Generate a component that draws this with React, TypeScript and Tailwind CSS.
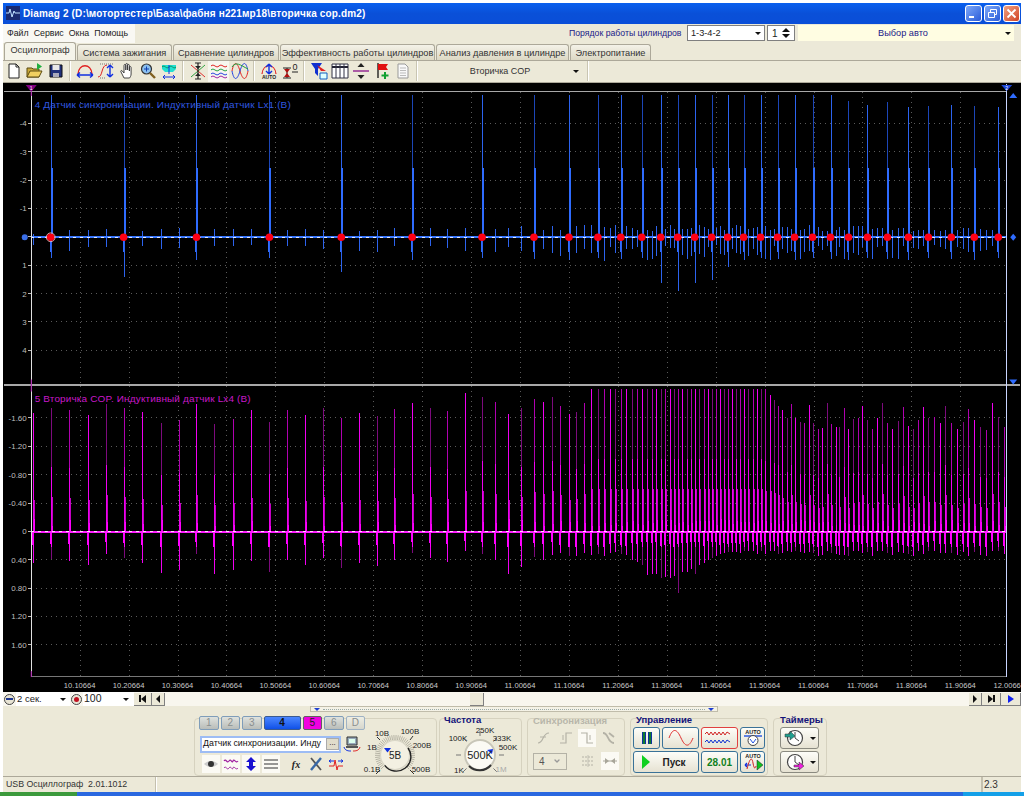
import { ChevronDown } from "lucide-react";
import type { ReactNode } from "react";

// first channel: sync pulses, one per engine cycle
const syncX = [50, 123, 196, 269, 341, 412, 482, 534, 569, 598, 621, 642, 661, 678, 695, 712, 728, 744, 761, 778, 795, 813, 831, 849, 868, 888, 909, 929, 952, 975, 999];
const syncTop = [95, 95, 95, 95, 95, 95, 95, 95, 95, 95, 95, 95, 95, 95, 95, 95, 95, 95, 95, 95, 95, 95, 95, 101, 105, 102, 107, 106, 105, 106, 107];
const syncLow: Record<number, number> = { 123: 277, 341: 272, 642: 258, 661: 283, 678: 291, 695: 283, 712: 280, 728: 267 };
const gridX = Array.from({ length: 20 }, (_, i) => 79 + 49 * i);

function rnd(n: number) {
  const v = Math.sin(n * 12.9898) * 43758.5453;
  return v - Math.floor(v);
}

function line(x: number, a: number, b: number) {
  return `M${Math.round(x) + 0.5} ${a}V${b}`;
}

function buildBlue() {
  let thin = "";
  let dim = "";
  let thick = "";
  syncX.forEach((x, i) => {
    const low = syncLow[x] ?? 258 + (i % 3);
    if (i % 2) dim += line(x, syncTop[i], 168);
    else thin += line(x, syncTop[i], 168);
    thin += line(x, 168, 237) + line(x, 237, low);
    thick += line(x + 1, 168, 232) + line(x, 168, 232) + line(x - 1, 238, 252) + line(x + 1, 222, 236);
    const next = syncX[i + 1];
    const stop = next ?? x;
    for (let j = 1; j < 4 && (next || i === 0); j++) {
      const mx = x + ((stop - x) * j) / 4;
      const busy = mx > 520 && mx < 900;
      thin += line(mx, 231 - rnd(mx) * (busy ? 6 : 3), 245 + rnd(mx + 1) * (busy ? 16 : 7));
    }
  });
  thin += line(32, 234, 245);
  return { thin, dim, thick };
}

function buildPink() {
  const xs = [32];
  syncX.forEach((x, i) => {
    if (i === syncX.length - 1) {
      xs.push(x, 1005);
      return;
    }
    for (let j = 0; j < 4; j++) xs.push(x + ((syncX[i + 1] - x) * j) / 4);
  });
  let bright = "";
  let mid = "";
  let dim = "";
  let soft = "";
  let thick = "";
  xs.forEach((x, i) => {
    const r = rnd(i + 3);
    let top = 400 + r * 25;
    if (x > 450 && x <= 590) top = 393 + r * 22;
    if (x > 590 && x <= 765) top = 389;
    if (x > 765 && x <= 785) top = 389 + ((x - 765) / 20) * 26;
    if (x > 785) top = i % 4 === 0 ? 402 + r * 8 : 418 + r * 13;
    const half = x > 590 && x < 765 ? 460 : Math.max(462, 532 - (532 - top) * 0.52);
    const dip = Math.exp(-Math.pow((x - 672) / 32, 2)) * 42 * (0.55 + rnd(i + 9) * 0.6);
    const low = Math.round(Math.max(551 + r * 24 * (x < 560 ? 1 : 0.25), 552 + dip));
    const tall = line(x, Math.round(top), Math.round(half));
    if (i % 3 === 1) dim += tall;
    else if (i % 3 === 2) mid += tall;
    else bright += tall;
    bright += line(x, Math.round(half), 532);
    soft += line(x + 1, Math.round(half) + 30, 532);
    if (i % 4 === 1) dim += line(x, 546, low);
    else bright += line(x, 546, low);
    thick += line(x, 532, 548) + line(x + 1, 520 + rnd(i) * 7, 532) + line(x - 1, 532, 542 + r * 6);
  });
  return { bright, mid, dim, soft, thick };
}

const blue = buildBlue();
const pink = buildPink();

function Scope() {
  const topY = [-4, -3, -2, -1, 0, 1, 2, 3, 4];
  const lowY = ["-1.60", "-1.20", "-0.80", "-0.40", "0", "0.40", "0.80", "1.20", "1.60"];
  const dots = "#5a5a5a";
  return (
    <svg viewBox="3 83 1018 610" className="block w-full h-[610px] bg-black" fontFamily="'Liberation Sans', sans-serif">
      {gridX.slice(0, 19).map((x) => (
        <g key={x} stroke={dots} strokeDasharray="1 4" shapeRendering="crispEdges">
          <path d={`M${x + 0.5} 92V384`} />
          <path d={`M${x + 0.5} 386V678`} />
        </g>
      ))}
      {topY.map((v, i) => (
        <g key={v}>
          {v !== 0 && <path d={`M30 ${123.5 + i * 28.4}H1007`} stroke={dots} strokeDasharray="1 4" shapeRendering="crispEdges" />}
          <path d={`M27 ${123.5 + i * 28.4}H30`} stroke="#bbb" shapeRendering="crispEdges" />
          <text x="26" y={126.500 + i * 28.4} fontSize="8" fill="#bdbdbd" textAnchor="end">{v}</text>
        </g>
      ))}
      {lowY.map((v, i) => (
        <g key={v}>
          {v !== "0" && <path d={`M30 ${418.5 + i * 28.4}H1007`} stroke={dots} strokeDasharray="1 4" shapeRendering="crispEdges" />}
          <path d={`M27 ${418.5 + i * 28.4}H30`} stroke="#bbb" shapeRendering="crispEdges" />
          <text x="26" y={421.500 + i * 28.4} fontSize="8" fill="#bdbdbd" textAnchor="end">{v}</text>
        </g>
      ))}

      <g fill="none" shapeRendering="crispEdges">
        <path d={blue.dim} stroke="#1c46b8" />
        <path d={blue.thin} stroke="#2c63ee" />
        <path d={blue.thick} stroke="#2f6cff" />
        <path d="M30 237.5H1007" stroke="#3a78ff" strokeWidth="2" />
        <path d="M30 237.5H1007" stroke="#dfe8ff" strokeDasharray="3 4" />

        <path d={pink.dim} stroke="#7d0a7d" />
        <path d={pink.mid} stroke="#b000b0" />
        <path d={pink.soft} stroke="#c400c4" />
        <path d={pink.bright} stroke="#f000f0" />
        <path d={pink.thick} stroke="#ff00ff" />
        <path d="M30 532.5H1007" stroke="#ff20ff" strokeWidth="2" />
        <path d="M30 532.5H1007" stroke="#ffd8ff" strokeDasharray="3 4" />

        <path d="M3 91.5H1007" stroke="#a8a8a8" />
        <path d="M3 385H1021" stroke="#a8a8a8" strokeWidth="2" />
        <path d="M30 677.5H1007" stroke="#777" />
        <path d="M30.5 91V678" stroke="#e0e0e0" />
        <path d="M1007.5 84V678" stroke="#c8d4ff" />
      </g>

      {syncX.map((x) => (
        <circle key={x} cx={x} cy="237.5" r="3.8" fill="#ff0014" />
      ))}
      <circle cx="50" cy="237.5" r="4.4" fill="none" stroke="#ffc0c0" strokeWidth="0.8" />
      <circle cx="24" cy="237.5" r="3" fill="#3a6ee8" />
      <path d="M1014 234l3 3.5l-3 3.5l-3-3.5z" fill="#2f6cff" />
      <path d="M1010 98l4-5l4 5z" fill="#2f6cff" />
      <path d="M1010 380l4 5l4-5z" fill="#2f6cff" />
      <path d="M25 85h11l-5.5 7z" fill="#800080" />
      <path d="M1002 85h11l-5.5 6z" fill="#1c46d8" />
      <path d="M30.5 92V96M30.5 380V392M30.5 672V678" stroke="#a000a0" />
      <text x="30.5" y="90" fontSize="5" fill="#fff" textAnchor="middle">1</text>
      <text x="1007.5" y="90" fontSize="5" fill="#fff" textAnchor="middle">2</text>

      <text x="34" y="108" fontSize="10" letterSpacing="0.15" fill="#3058e0">4 Датчик синхронизации. Индуктивный датчик Lx1 (В)</text>
      <text x="34" y="402" fontSize="10" letterSpacing="0.15" fill="#c818c8">5 Вторичка COP. Индуктивный датчик Lx4 (В)</text>

      {gridX.map((x, i) => (
        <text key={x} x={x} y="688.500" fontSize="7.600" fill="#c8c8c8" textAnchor="middle">
          {(10.10664 + i * 0.1).toFixed(5)}
        </text>
      ))}
    </svg>
  );
}

function Ic({ children, active }: { children: ReactNode; active?: boolean }) {
  return (
    <div className={`w-[21px] h-[21px] flex items-center justify-center shrink-0 ${active ? "bg-[#f7f6ef]" : ""}`}>
      <svg width="18" height="18" viewBox="0 0 18 18" fill="none">{children}</svg>
    </div>
  );
}

function Sep() {
  return <div className="w-px h-[20px] bg-[#c9c5b2] border-r border-white box-content mx-[3px] shrink-0" />;
}

const sFont = { fontFamily: "'Liberation Sans', sans-serif" };

function Toolbar() {
  return (
    <div className="h-[22px] flex items-center bg-[#ece9d8] border-b border-[#aca899]">
      <Ic><path d="M4 2h7l3 3v11H4z" fill="#fff" stroke="#222" /><path d="M11 2v3h3" stroke="#222" /></Ic>
      <Ic><path d="M1 15V6h5l1 1h6v8z" fill="#c9a93a" stroke="#5a4a10" /><path d="M1 15l3-6h12l-3 6z" fill="#f0d060" stroke="#5a4a10" /><path d="M11 1l5 3.5l-5 3.5z" fill="#20b040" /></Ic>
      <Ic><path d="M3 3h12v12H3z" fill="#20307a" stroke="#111" /><path d="M5.500 3h7v5h-7z" fill="#e8e8e8" /><path d="M6 11h6v4H6z" fill="#aab" /></Ic>
      <Sep />
      <Ic><path d="M2 12C3 1 15 1 16 12" stroke="#e02020" strokeWidth="1.3" /><path d="M1 13h16M1 13l3-2.500M1 13l3 2.500M17 13l-3-2.500M17 13l-3 2.500" stroke="#1030e0" strokeWidth="1.4" /></Ic>
      <Ic><path d="M1 15C6 15 4 3 10 3" stroke="#e02020" /><path d="M3 2h14M3 16h6" stroke="#777" strokeDasharray="1 1" /><path d="M13 3v12M13 3l-3 3M13 3l3 3M13 15l-3-3M13 15l3-3" stroke="#1030e0" strokeWidth="1.4" /></Ic>
      <Ic><path d="M6 16L3 10c-.8-1.400.6-2 1.400-1L6 11V3.500c0-1.500 1.800-1.500 1.800 0V8V2.500c0-1.400 1.800-1.400 1.800 0V8V3.500c0-1.400 1.800-1.400 1.800 0V9V5.500c0-1.300 1.700-1.300 1.700 0V12c0 2-1 3-1.500 4z" fill="#fff" stroke="#333" strokeWidth="0.9" /></Ic>
      <Ic><circle cx="7.500" cy="7" r="5" fill="#8ac0f0" stroke="#333" strokeWidth="1.200" /><path d="M5 7h5M7.500 4.500v5" stroke="#1040b0" /><path d="M11 11l5 5" stroke="#806020" strokeWidth="2.400" /></Ic>
      <Ic><path d="M2 3h14v4l-3 3H5L2 7z" fill="#20e0d0" /><path d="M2 5c3-3 4 3 7 0s4 3 7 0" stroke="#109060" /><path d="M3 15h12M3 15l2-2M3 15l2 2M15 15l-2-2M15 15l-2 2M9 3v9" stroke="#1030e0" /></Ic>
      <Sep />
      <Ic><path d="M2 3l14 12" stroke="#e03030" /><path d="M16 3L2 15" stroke="#30a040" /><path d="M9 1v16M6 1h6M6 17h6" stroke="#222" strokeWidth="1.200" /><path d="M6 4h6l-3 3zM6 14h6l-3-3z" fill="#222" /></Ic>
      <Ic active><path d="M1 4c3-3 5 3 8 0s5 3 8 0" stroke="#e02020" /><path d="M1 8c3-3 5 3 8 0s5 3 8 0" stroke="#20a040" /><path d="M1 12c3-3 5 3 8 0s5 3 8 0" stroke="#2040e0" /><path d="M1 15c3-3 5 3 8 0s5 3 8 0" stroke="#a020a0" /></Ic>
      <Ic><path d="M1 9C3-1 6-1 9 9s6 10 8 0" stroke="#e02020" /><path d="M1 9C3 19 6 19 9 9s6-10 8 0" stroke="#2040e0" /><path d="M1 5c4-6 8-2 16 2" stroke="#20a040" /></Ic>
      <Sep />
      <Ic><path d="M2 12C3 1 15 1 16 12" stroke="#e02020" strokeWidth="1.2" /><path d="M9 2v10M9 2L6 5M9 2l3 3M9 12l-3-3M9 12l3-3" stroke="#1030e0" strokeWidth="1.400" /><text x="9" y="17" fontSize="5" fontWeight="700" fill="#222" textAnchor="middle" style={sFont}>AUTO</text></Ic>
      <Ic><path d="M2 6h8M2 16h8M6 6v10" stroke="#222" /><path d="M3 7h6L6 11zM3 15h6l-3-4z" fill="#b01010" /><text x="14" y="8" fontSize="9" fill="#222" textAnchor="middle" style={sFont}>0</text><path d="M11 10h6" stroke="#222" /></Ic>
      <Sep />
      <Ic><path d="M1 1h11L8 7v7L5 11V7z" fill="#1030d0" /><path d="M7 3l9 6h-5z" fill="#e02020" /><path d="M10 11h7v6h-7z" fill="#dff" stroke="#1060c0" /></Ic>
      <Ic><path d="M1 2h16v14H1z" fill="#fff" stroke="#334" /><path d="M1 5h16" stroke="#223" strokeWidth="2" /><path d="M5 2v14M9 2v14M13 2v14" stroke="#334" /></Ic>
      <Ic><path d="M1 9h16" stroke="#902090" strokeWidth="1.400" /><path d="M5.500 5h7L9 1zM5.500 13h7L9 17z" fill="#222" /></Ic>
      <Ic><path d="M5 1v15" stroke="#222" strokeWidth="1.400" /><path d="M5 2h10l-2 3l2 3H5z" fill="#e01010" /><path d="M12 10v7M8.500 13.500h7" stroke="#10a030" strokeWidth="2" /></Ic>
      <Ic><path d="M4 2h7l3 3v11H4z" fill="#f8f8f8" stroke="#999" /><path d="M6 6h6M6 8.500h6M6 11h6M6 13.500h6" stroke="#bbb" /></Ic>
      <Sep />
      <div className="w-[163px] flex items-center pr-[5px]">
        <span className="flex-1 text-center pl-[6px] text-[9px] text-[#333]">Вторичка COP</span>
        <Arrow />
      </div>
      <Sep />
    </div>
  );
}

function Arrow() {
  return <span className="w-0 h-0 border-x-[3px] border-x-transparent border-t-[3px] border-t-[#111] shrink-0" />;
}

function Tab({ w, label, active }: { w: string; label: string; active?: boolean }) {
  return (
    <div className={`${w} text-center text-[9.2px] whitespace-nowrap text-[#333] rounded-t-[3px] border border-b-0 border-[#aca899] shrink-0 ${active ? "h-[18px] bg-[#f5f4ea] leading-[15px] text-[#222]" : "h-[16px] bg-linear-to-b from-[#f4f2e8] to-[#dcd8c4] leading-[16px]"}`}>
      {label}
    </div>
  );
}

function Combo({ w, text, tint }: { w: string; text: string; tint?: boolean }) {
  return (
    <div className={`${w} h-[16px] flex items-center px-[3px] text-[9.2px] ${tint ? "bg-[#fffde2] text-[#1a1a88]" : "bg-white border border-[#7f7f7f] text-[#222]"}`}>
      <span className={`flex-1 ${tint ? "text-center" : ""}`}>{text}</span>
      <Arrow />
    </div>
  );
}

function TitleBtn({ kind }: { kind: "min" | "max" | "close" }) {
  const bg = kind === "close" ? "from-[#f0a080] to-[#d04020]" : "from-[#7fa8f8] to-[#2a5ad8]";
  return (
    <div className={`w-[17px] h-[17px] rounded-[3px] border border-white bg-linear-to-br ${bg} flex items-center justify-center`}>
      <svg width="11" height="11" viewBox="0 0 11 11" stroke="#fff" fill="none">
        {kind === "min" && <path d="M1 9h5" strokeWidth="2" />}
        {kind === "max" && <path d="M1.500 4.500h6v5h-6zM3.500 4V1.500h6v5H8" />}
        {kind === "close" && <path d="M1.500 1.500l8 8M9.500 1.500l-8 8" strokeWidth="1.800" />}
      </svg>
    </div>
  );
}

function ChannelBtn({ label, w, tone }: { label: string; w: string; tone: "off" | "blue" | "pink" | "pale" }) {
  const cls = {
    off: "bg-linear-to-b from-[#dfe2de] to-[#b9bdb9] text-[#8a8f8f] border-[#7f9db9]",
    pale: "bg-linear-to-b from-[#eeeee4] to-[#d6d6cc] text-[#8a8f8f] border-[#9fb2c4]",
    blue: "bg-linear-to-b from-[#4a86ff] to-[#0f50e8] text-[#111] font-bold border-[#3a5a90]",
    pink: "bg-[#f000e0] text-[#222] border-[#606060]",
  }[tone];
  return <div className={`${w} h-[14px] rounded-[2px] border text-[10px] leading-[12px] text-center ${cls}`}>{label}</div>;
}

function Small({ children, active }: { children: ReactNode; active?: boolean }) {
  return (
    <div className={`w-[18px] h-[18px] flex items-center justify-center ${active ? "bg-[#fbfaf4]" : ""}`}>
      <svg width="16" height="16" viewBox="0 0 16 16" fill="none">{children}</svg>
    </div>
  );
}

function VoltKnob() {
  const ticks = Array.from({ length: 44 }, (_, i) => {
    const a = ((135 + i * (270 / 43)) * Math.PI) / 180;
    return `M${395 + 15 * Math.cos(a)} ${755 + 15 * Math.sin(a)}L${395 + 20 * Math.cos(a)} ${755 + 20 * Math.sin(a)}`;
  }).join("");
  return (
    <svg viewBox="365 719 71 57" width="71" height="57" className="shrink-0 overflow-visible" style={sFont}>
      <path d={ticks} stroke="#a8a698" strokeWidth="0.8" />
      <path d="M380 770l-4 4M380 740l-3-3M410 740l3-4M410 770l4 4" stroke="#333" />
      <circle cx="395" cy="755" r="14.500" fill="#f3f0e2" stroke="#d8d5c6" strokeWidth="1.200" />
      <path d="M384.700 765.300A14.500 14.500 0 0 0 408 748" fill="none" stroke="#222" strokeWidth="1.400" />
      <path d="M384 748h7l-3.500 4.500z" fill="#1030e0" />
      <text x="395" y="758.500" fontSize="10" fill="#222" textAnchor="middle">5В</text>
      {[["10В", 382, 736], ["100В", 410, 734], ["1В", 372, 750], ["200В", 422, 748], ["0.1В", 372, 772], ["500В", 421, 772]].map(([t, x, y]) => (
        <text key={t} x={x} y={y} fontSize="8" fill="#222" textAnchor="middle">{t}</text>
      ))}
    </svg>
  );
}

function FreqKnob() {
  const ticks = Array.from({ length: 7 }, (_, i) => {
    const a = ((135 + i * 45) * Math.PI) / 180;
    return `M${40 + 19 * Math.cos(a)} ${36 + 19 * Math.sin(a)}L${40 + 24 * Math.cos(a)} ${36 + 24 * Math.sin(a)}`;
  }).join("");
  return (
    <svg viewBox="0 0 83 58" width="83" height="58" className="absolute left-0 top-0" style={sFont}>
      <path d={ticks} stroke="#777" />
      <circle cx="40" cy="36" r="15" fill="#fbfaf4" stroke="#c8c6b8" strokeWidth="2" />
      <path d="M29 47A15 15 0 0 0 51 46" stroke="#333" strokeWidth="2" fill="none" />
      <path d="M47 31l6-1l-1 5z" fill="#1030e0" />
      <text x="40" y="40" fontSize="11" fill="#222" textAnchor="middle">500K</text>
      {[["100K", 18, 22], ["250K", 45, 14], ["333K", 62, 22], ["500K", 68, 31], ["1K", 19, 54]].map(([t, x, y]) => (
        <text key={t} x={x} y={y} fontSize="8" fill="#222" textAnchor="middle">{t}</text>
      ))}
      <text x="61" y="53" fontSize="8" fill="#aaa" textAnchor="middle">1M</text>
    </svg>
  );
}

function XpBtn({ w, red, children }: { w: string; red?: boolean; children: ReactNode }) {
  return (
    <div className={`${w} h-[22px] rounded-[3px] border flex items-center justify-center bg-linear-to-b from-[#fdfdf8] to-[#e6e2d2] ${red ? "border-[#e04040]" : "border-[#3a7298]"}`}>
      {children}
    </div>
  );
}

function AutoGlyph({ play }: { play?: boolean }) {
  return (
    <svg width="22" height="18" viewBox="0 0 22 18" fill="none" style={sFont}>
      <text x="11" y="5" fontSize="5.500" fontWeight="700" fill="#222" textAnchor="middle">AUTO</text>
      {play ? (
        <>
          <path d="M3 12h6M3 12l2-2M3 12l2 2" stroke="#1030e0" strokeWidth="1.200" />
          <path d="M5 16C8 4 10 4 11 10s2 6 3 3" stroke="#d02020" />
          <path d="M15 7l6 5l-6 5z" fill="#10c020" stroke="#222" strokeWidth="0.500" />
        </>
      ) : (
        <>
          <path d="M2 7h18" stroke="#2050e0" strokeWidth="1.400" />
          <circle cx="11" cy="11.500" r="5" fill="#fff" stroke="#444" />
          <path d="M8 10l3 4l3-4" stroke="#2050e0" />
        </>
      )}
    </svg>
  );
}

function Timer({ color }: { color: string }) {
  return (
    <div className="w-[39px] h-[22px] rounded-[3px] border border-[#8a8a80] bg-linear-to-b from-[#fdfdf8] to-[#e6e2d2] flex items-center pl-[3px] gap-[4px]">
      <svg width="22" height="18" viewBox="0 0 22 18" fill="none">
        <circle cx="11" cy="9" r="7.500" fill="#fff" stroke="#444" strokeWidth="1.200" />
        <path d="M11 3v6l4 3" stroke="#444" />
        <path d={color === "#20a090" ? "M1 5h5V2l5 5l-5 4V8H1z" : "M10 12h5V9l5 4l-5 4v-3h-5z"} fill={color} stroke="#333" strokeWidth="0.500" />
      </svg>
      <Arrow />
    </div>
  );
}

function Controls() {
  return (
    <div className="h-[71px] bg-[#ece9d8] pl-[191px] pt-[12px] border-b border-[#aca899] relative">
      <div className="absolute left-[307px] top-0 w-[408px] h-[6px] border border-[#c0bcaa] bg-[#f4f2e6] flex items-center justify-between px-[3px]">
        <span className="w-0 h-0 border-x-[3px] border-x-transparent border-t-[3px] border-t-[#2040d0]" />
        <span className="flex-1 mx-[3px] border-t border-dotted border-[#9aa]" />
        <span className="w-0 h-0 border-x-[3px] border-x-transparent border-t-[3px] border-t-[#2040d0]" />
      </div>
      <div className="flex h-[58px] items-start">
        {/* channel settings */}
        <div className="w-[243px] h-[58px] mr-[2px] rounded-[4px] border border-[#d6d2bf] flex pl-[4px]">
          <div className="w-[166px] -mt-[3px] shrink-0">
            <div className="flex gap-[2px]">
              <ChannelBtn label="1" w="w-[20px]" tone="off" />
              <ChannelBtn label="2" w="w-[20px]" tone="off" />
              <ChannelBtn label="3" w="w-[20px]" tone="off" />
              <ChannelBtn label="4" w="w-[38px]" tone="blue" />
              <ChannelBtn label="5" w="w-[20px]" tone="pink" />
              <ChannelBtn label="6" w="w-[20px]" tone="off" />
              <ChannelBtn label="D" w="w-[20px]" tone="pale" />
            </div>
            <div className="flex items-center mt-[5px]">
              <div className="w-[141px] h-[17px] ml-[1px] bg-white border-2 border-[#9dbcf4] flex items-center pl-[1px] text-[8.8px] text-[#111] overflow-hidden">
                <span className="flex-1 whitespace-nowrap">Датчик синхронизации. Инду</span>
                <span className="w-[13px] h-[12px] bg-[#e0dccb] border border-[#aaa] text-[8px] leading-[7px] text-center shrink-0">...</span>
              </div>
              <svg width="18" height="18" viewBox="0 0 18 18" fill="none" className="ml-[2px]">
                <path d="M4 2h10v8H4z" fill="#9ab" stroke="#333" /><path d="M6 4h6v4H6z" fill="#dfe" />
                <path d="M1 12c1 4 5 4 7 4" stroke="#1030e0" /><path d="M17 12c-1 4-5 4-7 4" stroke="#e02020" /><path d="M3 11h12v2H3z" fill="#555" />
              </svg>
            </div>
            <div className="flex mt-[2px] ml-[3px] gap-[2px]">
              <Small active><path d="M1 8c4-4 10-4 14 0c-4 4-10 4-14 0z" fill="#ccc" /><circle cx="8" cy="8" r="3" fill="#333" /></Small>
              <Small active><path d="M1 5c2-3 3 3 5 0s3 3 4 0s3 3 5 0" stroke="#a020a0" strokeWidth="1.200" /><path d="M1 12c2-3 3 3 5 0s3 3 4 0s3 3 5 0" stroke="#a020a0" /></Small>
              <Small active><path d="M8 1l5 5h-3v4h3l-5 5l-5-5h3V6H3z" fill="#1810d0" /></Small>
              <Small active><path d="M1 4h14M1 8h14M1 12h14" stroke="#333" /><path d="M1 8h14" stroke="#999" strokeDasharray="1 1" /></Small>
              <div className="w-[3px]" />
              <Small><text x="8" y="12" fontSize="10" fontWeight="700" fontStyle="italic" fill="#222" textAnchor="middle" style={{ fontFamily: "'Liberation Serif', serif" }}>fx</text></Small>
              <Small><path d="M3 2l10 12" stroke="#555" strokeWidth="1.800" /><path d="M13 2L3 14" stroke="#3868a8" strokeWidth="2.400" /></Small>
              <Small><path d="M1 10h5l1-6l2 10l1-4h5" stroke="#e02020" /><path d="M1 5h5M15 5h-5M1 5l2-1.500M1 5l2 1.500M15 5l-2-1.500M15 5l-2 1.500" stroke="#1030e0" /></Small>
            </div>
          </div>
          <VoltKnob />
        </div>

        {/* frequency */}
        <div className="w-[83px] h-[58px] mr-[5px] rounded-[4px] border border-[#d6d2bf] relative">
          <FreqKnob />
          <div className="absolute left-[4px] -top-[6px] text-[9.500px] font-bold text-[#13137a] leading-[14px]">Частота</div>
        </div>

        {/* sync, disabled while running */}
        <div className="w-[98px] h-[58px] mr-[5px] rounded-[4px] border border-[#d6d2bf] px-[5px]">
          <div className="text-[9.500px] font-bold text-[#b8b6aa] leading-[14px] -mt-[5px]">Синхронизация</div>
          <div className="flex justify-between mt-[1px] pl-[2px] pr-[1px]">
            <Small><path d="M2 13c6 0 4-10 11-10" stroke="#b4b2a6" strokeWidth="1.200" /><path d="M4 7h6" stroke="#b4b2a6" /></Small>
            <Small><path d="M2 13h6V3h6" stroke="#b4b2a6" strokeWidth="1.200" /><path d="M5 5v5" stroke="#b4b2a6" /></Small>
            <Small active><path d="M2 3h6v10h6" stroke="#b4b2a6" strokeWidth="1.200" /><path d="M11 5v5" stroke="#b4b2a6" /></Small>
            <Small><path d="M2 3c6 0 4 10 11 10M8 3l5 4" stroke="#b4b2a6" strokeWidth="1.800" /></Small>
          </div>
          <div className="flex items-center mt-[5px]">
            <div className="w-[37px] h-[17px] border border-[#b4b2a6] flex items-center px-[5px] text-[10px] text-[#555]">
              <span className="flex-1">4</span>
              <ChevronDown size={8} className="text-[#999]" strokeWidth={4} />
            </div>
            <div className="ml-[12px]">
              <Small><path d="M2 4h12M2 8h12M2 12h12" stroke="#b4b2a6" strokeDasharray="2 1" /><path d="M8 2v12" stroke="#c4c2b6" /></Small>
            </div>
            <div className="ml-[4px]">
              <Small active><path d="M1 8h14" stroke="#a8a69a" /><path d="M3 5l4 3l-4 3zM13 5L9 8l4 3z" fill="#a8a69a" /></Small>
            </div>
          </div>
        </div>

        {/* run controls */}
        <div className="w-[138px] h-[58px] mr-[5px] rounded-[4px] border border-[#d6d2bf] px-[2px]">
          <div className="text-[9.500px] font-bold text-[#13137a] leading-[14px] -mt-[6px] pl-[3px]">Управление</div>
          <div className="flex gap-[2px]">
            <XpBtn w="w-[27px]">
              <span className="w-[4px] h-[12px] bg-[#0f7a30] border-x border-[#1030a0]" />
              <span className="w-[4px] h-[12px] bg-[#0f7a30] border-x border-[#1030a0] ml-[2px]" />
            </XpBtn>
            <XpBtn w="w-[37px]">
              <svg width="26" height="16" viewBox="0 0 26 16" fill="none"><path d="M1 8C5-3 9-1 13 8s8 10 12 0" stroke="#e03030" /></svg>
            </XpBtn>
            <XpBtn w="w-[37px]" red>
              <svg width="32" height="18" viewBox="0 0 32 18" fill="none"><path d="M1 5l2-2l2 3l2-3l2 3l2-3l2 3l2-3l2 3l2-3l2 3l2-3l3 2" stroke="#d02020" /><path d="M1 13l2-2l2 3l2-3l2 3l2-3l2 3l2-3l2 3l2-3l2 3l2-3l3 2" stroke="#1030d0" /></svg>
            </XpBtn>
            <XpBtn w="w-[25px]"><AutoGlyph /></XpBtn>
          </div>
          <div className="flex gap-[2px] mt-[2px]">
            <div className="w-[66px] h-[22px] rounded-[3px] border border-[#3a7298] flex items-center bg-linear-to-b from-[#fdfdf8] to-[#e6e2d2] pl-[7px]">
              <svg width="10" height="16" viewBox="0 0 10 16"><path d="M1 1l8 7l-8 7z" fill="#10d020" /></svg>
              <span className="flex-1 text-center text-[10px] font-bold text-[#222] pl-[5px] pr-[6px]">Пуск</span>
            </div>
            <XpBtn w="w-[37px]"><span className="text-[10px] font-bold text-[#108020]">28.01</span></XpBtn>
            <XpBtn w="w-[25px]"><AutoGlyph play /></XpBtn>
          </div>
        </div>

        {/* timers */}
        <div className="w-[54px] h-[58px] rounded-[4px] border border-[#d6d2bf] pl-[6px]">
          <div className="text-[9.500px] font-bold text-[#13137a] leading-[14px] -mt-[6px]">Таймеры</div>
          <div><Timer color="#20a090" /></div>
          <div className="mt-[2px]"><Timer color="#f020e0" /></div>
        </div>
      </div>
    </div>
  );
}

function NavBtn({ w, children }: { w: string; children: ReactNode }) {
  return <div className={`${w} h-[13px] bg-[#ece9d8] border-r border-b border-[#808080] flex items-center justify-center shrink-0`}>{children}</div>;
}

function RoundBtn({ mark }: { mark: "minus" | "plus" }) {
  return (
    <div className="w-[11px] h-[11px] rounded-full border border-[#444] bg-[#e8e4d4] flex items-center justify-center mx-[1px] shrink-0">
      {mark === "minus" ? <span className="w-[7px] h-[2px] bg-[#203890]" /> : <span className="w-[5px] h-[5px] rounded-full bg-[#c01020]" />}
    </div>
  );
}

export default function App() {
  return (
    <div className="w-[1024px] h-[796px] overflow-hidden bg-white flex flex-col font-['Liberation_Sans',sans-serif]">
      <div className="px-[3px] pt-[3px] flex-1 flex flex-col min-h-0">
        <div className="h-[21px] flex items-center pl-[3px] pr-[1px] bg-linear-to-b from-[#0a60ee] via-[#0a50d8] to-[#0a4ed8]">
          <svg width="14" height="14" viewBox="0 0 14 14" className="shrink-0">
            <path d="M0 0h14v14H0z" fill="#1a2a70" />
            <path d="M0 7h3l1-4l2 8l2-6l1 2h5" stroke="#bfe0ff" fill="none" />
          </svg>
          <span className="ml-[3px] flex-1 text-[10px] font-bold text-white tracking-[0.15px] whitespace-nowrap">Diamag 2 (D:\мотортестер\База\фабня н221мр18\вторичка сор.dm2)</span>
          <div className="flex gap-[2px]">
            <TitleBtn kind="min" />
            <TitleBtn kind="max" />
            <TitleBtn kind="close" />
          </div>
        </div>

        <div className="h-[19px] flex items-center bg-[#ece9d8]">
          <div className="w-[132px] h-full bg-[#f9f8f3] flex items-center gap-[5px] pl-[4px] text-[8.800px] text-[#222]">
            <span>Файл</span>
            <span>Сервис</span>
            <span>Окна</span>
            <span>Помощь</span>
          </div>
          <span className="ml-[434px] w-[118px] text-[8.700px] text-[#1a1a88] whitespace-nowrap">Порядок работы цилиндров</span>
          <Combo w="w-[78px]" text="1-3-4-2" />
          <div className="w-[28px] h-[16px] ml-[2px] bg-white border border-[#7f7f7f] flex items-center justify-between px-[4px] text-[10px] text-[#222]">
            <span>1</span>
            <span className="flex flex-col gap-[2px]">
              <span className="w-0 h-0 border-x-[4px] border-x-transparent border-b-[4px] border-b-[#111]" />
              <span className="w-0 h-0 border-x-[4px] border-x-transparent border-t-[4px] border-t-[#111]" />
            </span>
          </div>
          <div className="ml-[3px]">
            <Combo w="w-[216px]" text="Выбор авто" tint />
          </div>
        </div>

        <div className="h-[18px] flex items-end gap-[1px] bg-[#ece9d8] pl-[1px] border-b border-[#aca899]">
          <Tab w="w-[72px]" label="Осциллограф" active />
          <Tab w="w-[95px]" label="Система зажигания" />
          <Tab w="w-[106px]" label="Сравнение цилиндров" />
          <Tab w="w-[155px]" label="Эффективность работы цилиндров" />
          <Tab w="w-[133px]" label="Анализ давления в цилиндре" />
          <Tab w="w-[81px]" label="Электропитание" />
        </div>

        <Toolbar />
        <Scope />

        <div className="h-[14px] flex items-center bg-[#f8f6ee]">
          <RoundBtn mark="minus" />
          <div className="w-[54px] h-[14px] bg-white flex items-center pr-[4px] pl-[1px] text-[9.500px] text-[#222] shrink-0">
            <span className="flex-1">2 сек.</span>
            <Arrow />
          </div>
          <RoundBtn mark="plus" />
          <div className="w-[51px] h-[14px] bg-white flex items-center pr-[5px] pl-[1px] text-[10.500px] text-[#222] shrink-0">
            <span className="flex-1">100</span>
            <Arrow />
          </div>
          <NavBtn w="w-[18px]"><span className="w-[2px] h-[7px] bg-[#111]" /><span className="w-0 h-0 border-y-[4px] border-y-transparent border-r-[5px] border-r-[#111]" /></NavBtn>
          <NavBtn w="w-[13px]"><span className="w-0 h-0 border-y-[4px] border-y-transparent border-r-[4px] border-r-[#111]" /></NavBtn>
          <div className="flex-1 relative h-full">
            <div className="absolute left-[305px] top-[1px] w-[14px] h-[13px] bg-[#ece9d8] border-r border-b border-[#808080]" />
          </div>
          <NavBtn w="w-[13px]"><span className="w-0 h-0 border-y-[4px] border-y-transparent border-l-[4px] border-l-[#111]" /></NavBtn>
          <NavBtn w="w-[19px]"><span className="w-0 h-0 border-y-[4px] border-y-transparent border-l-[5px] border-l-[#111]" /><span className="w-[2px] h-[7px] bg-[#111]" /></NavBtn>
          <NavBtn w="w-[20px]"><span className="w-0 h-0 border-y-[4px] border-y-transparent border-l-[6px] border-l-[#1020f0]" /></NavBtn>
        </div>

        <Controls />

        <div className="h-[15px] flex bg-[#ece9d8] text-[8.800px] text-[#333] leading-[15px]">
          <div className="w-[153px] pl-[3px] border-r border-[#c4c0ae] whitespace-nowrap">USB Осциллограф &nbsp;2.01.1012</div>
          <div className="flex-1 border-l border-white border-r-[#c4c0ae] border-r" />
          <div className="w-[39px] pl-[1px] border-l border-[#c4c0ae] text-[10px]">2.3</div>
        </div>
      </div>
      <div className="h-[4px] flex shrink-0 bg-[#2a68e0]">
        <div className="w-[77px] bg-[#3c9a3c]" />
        <div className="flex-1" />
        <div className="w-[61px] bg-[#14a0e8]" />
      </div>
    </div>
  );
}
